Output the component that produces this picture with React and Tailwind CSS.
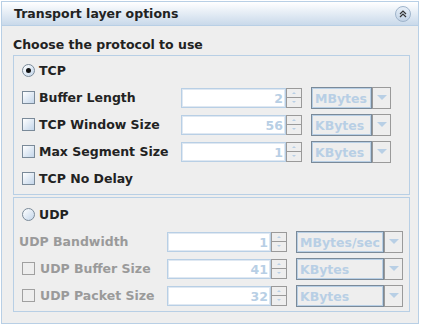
import React from 'react';

const font = { fontFamily: '"DejaVu Sans", Verdana, sans-serif' };

function Check({ disabled }) {
  return disabled ? (
    <span className="w-[13px] h-[13px] shrink-0 border border-[#a0a0a0] bg-[#eeeeee]" />
  ) : (
    <span className="w-[13px] h-[13px] shrink-0 border border-[#7a8a99] bg-linear-to-br from-white to-[#c4d6ea]" />
  );
}

function Radio({ checked }) {
  return (
    <span className="w-[13px] h-[13px] shrink-0 rounded-full border border-[#7a8a99] bg-linear-to-br from-white to-[#c4d6ea] flex items-center justify-center">
      {checked && <span className="w-[5px] h-[5px] rounded-full bg-[#111]" />}
    </span>
  );
}

function Spinner({ value, width }) {
  return (
    <div className="flex h-[20px]">
      <div
        className="border border-[#b8cfe5] bg-white text-right pr-[2px] text-[#b8cfe5] leading-[19px] shadow-[inset_0_0_0_1px_#dfe8f2]"
        style={{ width }}
      >
        {value}
      </div>
      <div className="w-[16px] flex flex-col border border-[#9a9a9a] bg-[#eeeeee]">
        <div className="flex-1 flex items-center justify-center border-b border-[#9a9a9a]">
          <span className="w-0 h-0 border-l-[2px] border-r-[2px] border-b-[2px] border-l-transparent border-r-transparent border-b-[#b8cfe5]" />
        </div>
        <div className="flex-1 flex items-center justify-center">
          <span className="w-0 h-0 border-l-[2px] border-r-[2px] border-t-[2px] border-l-transparent border-r-transparent border-t-[#b8cfe5]" />
        </div>
      </div>
    </div>
  );
}

function Combo({ value, width }) {
  return (
    <div className="flex h-[22px]">
      <div
        className="border border-[#7a8a99] shadow-[inset_0_0_0_1px_#b8cfe5] text-[#b8cfe5] pl-[3px] leading-[21px] whitespace-nowrap overflow-hidden"
        style={{ width }}
      >
        {value}
      </div>
      <div className="w-[19px] border border-[#9a9a9a] flex items-center justify-center">
        <span className="w-0 h-0 border-l-[5px] border-r-[5px] border-t-[5px] border-l-transparent border-r-transparent border-t-[#b8cfe5]" />
      </div>
    </div>
  );
}

function TcpRow({ label, value, unit }) {
  return (
    <div className="h-[27px] flex items-center">
      <div className="w-[159px] flex items-center gap-[4px]">
        <Check />
        <span className="pt-[2px]">{label}</span>
      </div>
      <Spinner value={value} width={105} />
      <div className="ml-[9px]">
        <Combo value={unit} width={61} />
      </div>
    </div>
  );
}

function UdpRow({ label, value, unit, check }) {
  return (
    <div className={`h-[27px] flex items-center ${check ? 'pl-[8px]' : 'pl-[5px]'}`}>
      <div className={`${check ? 'w-[145px]' : 'w-[148px]'} flex items-center gap-[5px] text-[#9a9a9a]`}>
        {check && <Check disabled />}
        <span className="pt-[2px]">{label}</span>
      </div>
      <Spinner value={value} width={104} />
      <div className="ml-[9px]">
        <Combo value={unit} width={88} />
      </div>
    </div>
  );
}

export default function App() {
  return (
    <div className="w-[422px] h-[328px] bg-white pt-[1px] pl-[1px] text-[12.5px] font-bold text-[#333]" style={font}>
      <div className="w-[418px] h-[323px] border border-[#b8cfe5] bg-[#eeeeee] flex flex-col">
        {/* header */}
        <div className="h-[24px] shrink-0 border-b border-[#b8cfe5] bg-linear-to-b from-white to-[#c9d9ea] flex items-center justify-between pl-[12px] pr-[7px]">
          <span className="pt-[2px] text-[#222]">Transport layer options</span>
          <span className="w-[16px] h-[16px] rounded-full border border-[#9fb4cb] bg-linear-to-b from-[#e6eef7] to-[#c2d3e6] flex items-center justify-center">
            <svg width="8" height="8" viewBox="0 0 8 8" fill="none" stroke="#333" strokeWidth="1.2">
              <path d="M1 4 L4 1 L7 4" />
              <path d="M1 7 L4 4 L7 7" />
            </svg>
          </span>
        </div>

        <div className="pl-[11px] pr-[8px]">
          <div className="h-[29px] flex items-center pt-[10px] text-[#222]">Choose the protocol to use</div>

          {/* TCP group */}
          <div className="border border-[#b8cfe5] pt-[1px] pb-[2px] pl-[8px] text-[#222]">
            <div className="h-[27px] flex items-center gap-[4px]">
              <Radio checked />
              <span className="pt-[2px]">TCP</span>
            </div>
            <TcpRow label="Buffer Length" value="2" unit="MBytes" />
            <TcpRow label="TCP Window Size" value="56" unit="KBytes" />
            <TcpRow label="Max Segment Size" value="1" unit="KBytes" />
            <div className="h-[27px] flex items-center gap-[4px]">
              <Check />
              <span className="pt-[2px]">TCP No Delay</span>
            </div>
          </div>

          {/* UDP group */}
          <div className="mt-[2px] border border-[#b8cfe5] pt-[3px] pb-[2px] text-[#222]">
            <div className="h-[27px] flex items-center gap-[4px] pl-[8px]">
              <Radio />
              <span className="pt-[2px]">UDP</span>
            </div>
            <UdpRow label="UDP Bandwidth" value="1" unit="MBytes/sec" />
            <UdpRow label="UDP Buffer Size" value="41" unit="KBytes" check />
            <UdpRow label="UDP Packet Size" value="32" unit="KBytes" check />
          </div>
        </div>
      </div>
    </div>
  );
}
